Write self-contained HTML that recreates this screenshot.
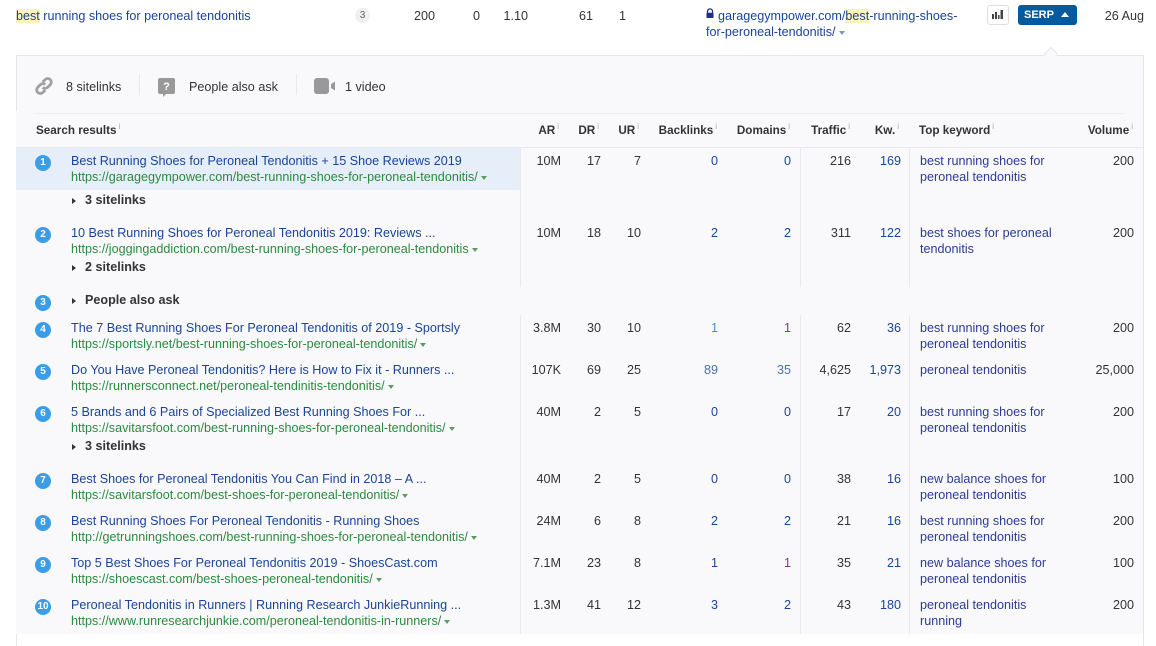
<!DOCTYPE html>
<html><head><meta charset="utf-8">
<style>
html,body{margin:0;padding:0;background:#fff}
body{width:1156px;height:646px;position:relative;overflow:hidden;font-family:"Liberation Sans",Arial,sans-serif;font-size:12.6px;color:#333}
.a{position:absolute;white-space:nowrap;line-height:16px;margin-top:1px}
.b{position:absolute}
.r{position:absolute;white-space:nowrap;line-height:16px;text-align:right;margin-top:1px}
.l{color:#1a4496}
.g{color:#2b8a3e}
.m{color:#2c3a94}
.p{color:#7d3a86}
.h{font-weight:bold;color:#333;font-size:11.7px}
.s{font-weight:bold;color:#333}
.n{position:absolute;width:16px;height:16px;border-radius:50%;background:#3b9de6;color:#fff;font-weight:bold;font-size:10px;line-height:16px;text-align:center;left:35px}
.tg{position:absolute;left:72px;width:0;height:0;border-left:4px solid #333;border-top:3px solid transparent;border-bottom:3px solid transparent}
.d{display:inline-block;width:0;height:0;border-left:3.5px solid transparent;border-right:3.5px solid transparent;border-top:4px solid #5a9e5f;margin-left:3px;vertical-align:1px}
.v{position:absolute;width:1px;background:#e8e8ee}
sup{font-size:8px;font-weight:normal;color:#aaa;line-height:0;vertical-align:5px;margin-left:2px}
mark{background:#fdf1bd;color:inherit}
</style></head><body>

<div class="a l" style="left:16px;top:7px"><mark>best</mark> running shoes for peroneal tendonitis</div>
<div class="b" style="left:355px;top:8px;width:15px;height:15px;border-radius:50%;background:#f0f0f2;color:#666;font-size:10px;line-height:15px;text-align:center">3</div>
<div class="r" style="right:721px;top:7px">200</div>
<div class="r" style="right:676px;top:7px">0</div>
<div class="r" style="right:628px;top:7px">1.10</div>
<div class="r" style="right:563px;top:7px">61</div>
<div class="r" style="right:530px;top:7px">1</div>
<svg class="b" style="left:705px;top:8px" width="10" height="11" viewBox="0 0 10 11"><path d="M2.5 5V3.4a2.5 2.5 0 0 1 5 0V5" fill="none" stroke="#1c2f8c" stroke-width="1.3"/><rect x="1.5" y="4.8" width="7" height="5.2" rx=".6" fill="#1c2f8c"/></svg>
<div class="a l" style="left:718px;top:7px">garagegympower.com/<mark>best</mark>-running-shoes-</div>
<div class="a l" style="left:706px;top:23px">for-peroneal-tendonitis/<span class="d" style="border-top-color:#7f93c4"></span></div>
<div class="b" style="left:987px;top:5px;width:20px;height:18px;border:1px solid #ddd;border-radius:3px;background:#fff"></div>
<svg class="b" style="left:992px;top:10px" width="11" height="9" viewBox="0 0 11 9"><path d="M0 4h2v5H0zM3 2h2v7H3zM6 5h1.5v4H6zM8.5 0H11v9H8.5z" fill="#444"/></svg>
<div class="b" style="left:1018px;top:5px;width:59px;height:20px;border-radius:3px;background:#045a9e"></div>
<div class="a" style="left:1024px;top:6px;color:#fff;font-weight:bold;font-size:11px">SERP</div>
<div class="b" style="left:1061px;top:12px;width:0;height:0;border-left:4px solid transparent;border-right:4px solid transparent;border-bottom:5px solid #fff"></div>
<div class="r" style="right:12px;top:7px">26 Aug</div>

<!-- panel -->
<div class="b" style="left:16px;top:55px;width:1128px;height:591px;border:1px solid #e6e6ea;border-bottom:0;box-sizing:border-box;background:#fff"></div>
<div class="b" style="left:16px;top:56px;width:1127px;height:578px;background:#f9f9fc"></div>
<div class="b" style="left:16px;top:56px;width:1px;height:55px;background:#e6e6ea"></div>
<div class="b" style="left:1046px;top:49px;width:10px;height:10px;background:#fafafc;border-left:1px solid #e6e6ea;border-top:1px solid #e6e6ea;transform:rotate(45deg);box-sizing:border-box"></div>
<div class="b" style="left:1042px;top:56px;width:20px;height:6px;background:#f9f9fc"></div>

<svg class="b" style="left:34px;top:76px" width="20" height="20" viewBox="0 0 20 20"><g fill="none" stroke="#a0a0a0" stroke-width="2.8"><path d="M8.7 6l2.4-2.4a3.6 3.6 0 0 1 5.2 5l-2.6 2.6a3.6 3.6 0 0 1-5 .2"/><path d="M11.3 14l-2.4 2.4a3.6 3.6 0 0 1-5.2-5l2.6-2.6a3.6 3.6 0 0 1 5-.2"/></g></svg>
<div class="a" style="left:66px;top:78px">8 sitelinks</div>
<div class="v" style="left:139px;top:74px;height:21px"></div>
<svg class="b" style="left:158px;top:78px" width="18" height="19" viewBox="0 0 18 19"><path d="M2 0h13a2 2 0 0 1 2 2v12a2 2 0 0 1-2 2H8l-3 3v-3H2a2 2 0 0 1-2-2V2a2 2 0 0 1 2-2z" fill="#999"/><text x="8.5" y="12" font-family="Liberation Sans" font-size="11" font-weight="bold" fill="#fff" text-anchor="middle">?</text></svg>
<div class="a" style="left:189px;top:78px">People also ask</div>
<div class="v" style="left:296px;top:74px;height:21px"></div>
<svg class="b" style="left:314px;top:78px" width="22" height="16" viewBox="0 0 22 16"><rect x="0" y="0" width="15" height="16" rx="3" fill="#999"/><path d="M17 6l4-2.5v9L17 10z" fill="#999"/></svg>
<div class="a" style="left:345px;top:78px">1 video</div>

<div class="b" style="left:35px;top:113px;width:1089px;height:1px;background:#eeeef1"></div>
<div class="b" style="left:16px;top:147px;width:1127px;height:1px;background:#e8e8ee"></div>

<div class="a h" style="left:36px;top:122px">Search results<sup>i</sup></div>
<div class="r h" style="right:597px;top:122px">AR<sup>i</sup></div>
<div class="r h" style="right:557px;top:122px">DR<sup>i</sup></div>
<div class="r h" style="right:517px;top:122px">UR<sup>i</sup></div>
<div class="r h" style="right:439px;top:122px">Backlinks<sup>i</sup></div>
<div class="r h" style="right:366px;top:122px">Domains<sup>i</sup></div>
<div class="r h" style="right:306px;top:122px">Traffic<sup>i</sup></div>
<div class="r h" style="right:257px;top:122px">Kw.<sup>i</sup></div>
<div class="a h" style="left:919px;top:122px">Top keyword<sup>i</sup></div>
<div class="r h" style="right:23px;top:122px">Volume<sup>i</sup></div>

<div class="b" style="left:16px;top:148px;width:504px;height:42px;background:#e6eef9"></div>
<div class="v" style="left:520px;top:148px;height:139px"></div>
<div class="v" style="left:800px;top:148px;height:139px"></div>
<div class="v" style="left:909px;top:148px;height:139px"></div>
<div class="v" style="left:520px;top:315px;height:319px"></div>
<div class="v" style="left:800px;top:315px;height:319px"></div>
<div class="v" style="left:909px;top:315px;height:319px"></div>

<!-- Row 1 -->
<div class="n" style="top:155px">1</div>
<div class="a l" style="left:71px;top:152px">Best Running Shoes for Peroneal Tendonitis + 15 Shoe Reviews 2019</div>
<div class="a g" style="left:71px;top:168px">https://garagegympower.com/best-running-shoes-for-peroneal-tendonitis/<span class="d"></span></div>
<div class="tg" style="top:198px"></div><div class="a s" style="left:85px;top:191px">3 sitelinks</div>
<div class="r" style="right:595px;top:152px">10M</div><div class="r" style="right:555px;top:152px">17</div><div class="r" style="right:515px;top:152px">7</div>
<div class="r l" style="right:438px;top:152px">0</div><div class="r l" style="right:365px;top:152px">0</div><div class="r" style="right:305px;top:152px">216</div><div class="r l" style="right:255px;top:152px">169</div>
<div class="a m" style="left:920px;top:152px">best running shoes for<br>peroneal tendonitis</div><div class="r" style="right:22px;top:152px">200</div>

<!-- Row 2 -->
<div class="n" style="top:227px">2</div>
<div class="a l" style="left:71px;top:224px">10 Best Running Shoes for Peroneal Tendonitis 2019: Reviews ...</div>
<div class="a g" style="left:71px;top:240px">https://joggingaddiction.com/best-running-shoes-for-peroneal-tendonitis<span class="d"></span></div>
<div class="tg" style="top:265px"></div><div class="a s" style="left:85px;top:258px">2 sitelinks</div>
<div class="r" style="right:595px;top:224px">10M</div><div class="r" style="right:555px;top:224px">18</div><div class="r" style="right:515px;top:224px">10</div>
<div class="r l" style="right:438px;top:224px">2</div><div class="r l" style="right:365px;top:224px">2</div><div class="r" style="right:305px;top:224px">311</div><div class="r l" style="right:255px;top:224px">122</div>
<div class="a m" style="left:920px;top:224px">best shoes for peroneal<br>tendonitis</div><div class="r" style="right:22px;top:224px">200</div>

<!-- Row 3 -->
<div class="n" style="top:295px">3</div>
<div class="tg" style="top:298px"></div><div class="a s" style="left:85px;top:291px">People also ask</div>

<!-- Row 4 -->
<div class="n" style="top:322px">4</div>
<div class="a l" style="left:71px;top:319px">The 7 Best Running Shoes For Peroneal Tendonitis of 2019 - Sportsly</div>
<div class="a g" style="left:71px;top:335px">https://sportsly.net/best-running-shoes-for-peroneal-tendonitis/<span class="d"></span></div>
<div class="r" style="right:595px;top:319px">3.8M</div><div class="r" style="right:555px;top:319px">30</div><div class="r" style="right:515px;top:319px">10</div>
<div class="r" style="right:438px;top:319px;color:#3d8fd8">1</div><div class="r p" style="right:365px;top:319px">1</div><div class="r" style="right:305px;top:319px">62</div><div class="r l" style="right:255px;top:319px">36</div>
<div class="a m" style="left:920px;top:319px">best running shoes for<br>peroneal tendonitis</div><div class="r" style="right:22px;top:319px">200</div>

<!-- Row 5 -->
<div class="n" style="top:364px">5</div>
<div class="a l" style="left:71px;top:361px">Do You Have Peroneal Tendonitis? Here is How to Fix it - Runners ...</div>
<div class="a g" style="left:71px;top:377px">https://runnersconnect.net/peroneal-tendinitis-tendonitis/<span class="d"></span></div>
<div class="r" style="right:595px;top:361px">107K</div><div class="r" style="right:555px;top:361px">69</div><div class="r" style="right:515px;top:361px">25</div>
<div class="r" style="right:438px;top:361px;color:#4a6fb0">89</div><div class="r" style="right:365px;top:361px;color:#4a6fb0">35</div><div class="r" style="right:305px;top:361px">4,625</div><div class="r l" style="right:255px;top:361px">1,973</div>
<div class="a m" style="left:920px;top:361px">peroneal tendonitis</div><div class="r" style="right:22px;top:361px">25,000</div>

<!-- Row 6 -->
<div class="n" style="top:406px">6</div>
<div class="a l" style="left:71px;top:403px">5 Brands and 6 Pairs of Specialized Best Running Shoes For ...</div>
<div class="a g" style="left:71px;top:419px">https://savitarsfoot.com/best-running-shoes-for-peroneal-tendonitis/<span class="d"></span></div>
<div class="tg" style="top:444px"></div><div class="a s" style="left:85px;top:437px">3 sitelinks</div>
<div class="r" style="right:595px;top:403px">40M</div><div class="r" style="right:555px;top:403px">2</div><div class="r" style="right:515px;top:403px">5</div>
<div class="r l" style="right:438px;top:403px">0</div><div class="r l" style="right:365px;top:403px">0</div><div class="r" style="right:305px;top:403px">17</div><div class="r l" style="right:255px;top:403px">20</div>
<div class="a m" style="left:920px;top:403px">best running shoes for<br>peroneal tendonitis</div><div class="r" style="right:22px;top:403px">200</div>

<!-- Row 7 -->
<div class="n" style="top:473px">7</div>
<div class="a l" style="left:71px;top:470px">Best Shoes for Peroneal Tendonitis You Can Find in 2018 – A ...</div>
<div class="a g" style="left:71px;top:486px">https://savitarsfoot.com/best-shoes-for-peroneal-tendonitis/<span class="d"></span></div>
<div class="r" style="right:595px;top:470px">40M</div><div class="r" style="right:555px;top:470px">2</div><div class="r" style="right:515px;top:470px">5</div>
<div class="r l" style="right:438px;top:470px">0</div><div class="r l" style="right:365px;top:470px">0</div><div class="r" style="right:305px;top:470px">38</div><div class="r l" style="right:255px;top:470px">16</div>
<div class="a m" style="left:920px;top:470px">new balance shoes for<br>peroneal tendonitis</div><div class="r" style="right:22px;top:470px">100</div>

<!-- Row 8 -->
<div class="n" style="top:515px">8</div>
<div class="a l" style="left:71px;top:512px">Best Running Shoes For Peroneal Tendonitis - Running Shoes</div>
<div class="a g" style="left:71px;top:528px">http://getrunningshoes.com/best-running-shoes-for-peroneal-tendonitis/<span class="d"></span></div>
<div class="r" style="right:595px;top:512px">24M</div><div class="r" style="right:555px;top:512px">6</div><div class="r" style="right:515px;top:512px">8</div>
<div class="r l" style="right:438px;top:512px">2</div><div class="r l" style="right:365px;top:512px">2</div><div class="r" style="right:305px;top:512px">21</div><div class="r l" style="right:255px;top:512px">16</div>
<div class="a m" style="left:920px;top:512px">best running shoes for<br>peroneal tendonitis</div><div class="r" style="right:22px;top:512px">200</div>

<!-- Row 9 -->
<div class="n" style="top:557px">9</div>
<div class="a l" style="left:71px;top:554px">Top 5 Best Shoes For Peroneal Tendonitis 2019 - ShoesCast.com</div>
<div class="a g" style="left:71px;top:570px">https://shoescast.com/best-shoes-peroneal-tendonitis/<span class="d"></span></div>
<div class="r" style="right:595px;top:554px">7.1M</div><div class="r" style="right:555px;top:554px">23</div><div class="r" style="right:515px;top:554px">8</div>
<div class="r l" style="right:438px;top:554px">1</div><div class="r p" style="right:365px;top:554px">1</div><div class="r" style="right:305px;top:554px">35</div><div class="r l" style="right:255px;top:554px">21</div>
<div class="a m" style="left:920px;top:554px">new balance shoes for<br>peroneal tendonitis</div><div class="r" style="right:22px;top:554px">100</div>

<!-- Row 10 -->
<div class="n" style="top:599px">10</div>
<div class="a l" style="left:71px;top:596px">Peroneal Tendonitis in Runners | Running Research JunkieRunning ...</div>
<div class="a g" style="left:71px;top:612px">https://www.runresearchjunkie.com/peroneal-tendonitis-in-runners/<span class="d"></span></div>
<div class="r" style="right:595px;top:596px">1.3M</div><div class="r" style="right:555px;top:596px">41</div><div class="r" style="right:515px;top:596px">12</div>
<div class="r l" style="right:438px;top:596px">3</div><div class="r l" style="right:365px;top:596px">2</div><div class="r" style="right:305px;top:596px">43</div><div class="r l" style="right:255px;top:596px">180</div>
<div class="a m" style="left:920px;top:596px">peroneal tendonitis<br>running</div><div class="r" style="right:22px;top:596px">200</div>

</body></html>
